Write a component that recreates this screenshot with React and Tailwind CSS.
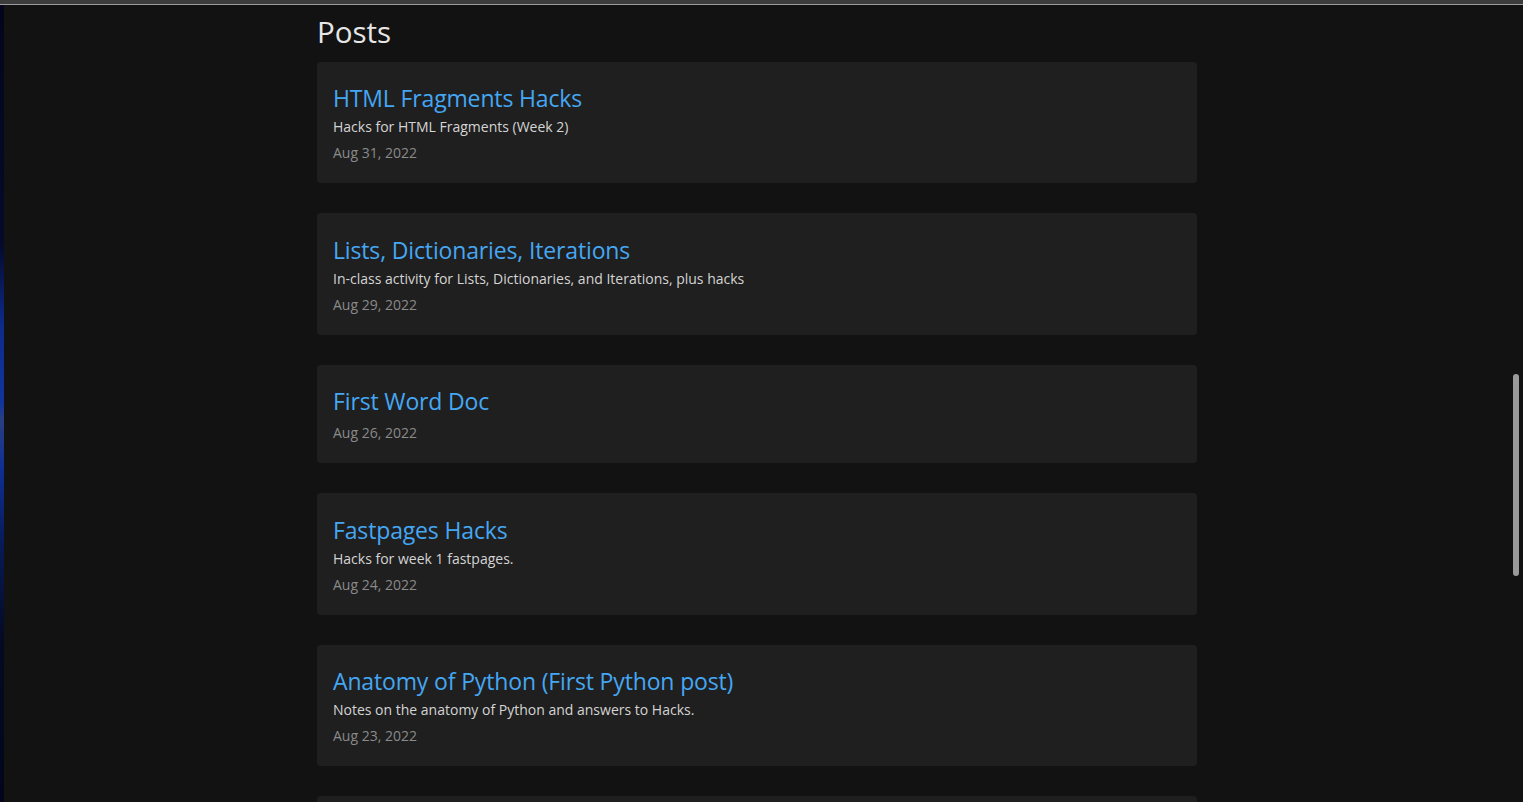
import React from "react";

const posts = [
  { title: "HTML Fragments Hacks", desc: "Hacks for HTML Fragments (Week 2)", date: "Aug 31, 2022" },
  { title: "Lists, Dictionaries, Iterations", desc: "In-class activity for Lists, Dictionaries, and Iterations, plus hacks", date: "Aug 29, 2022" },
  { title: "First Word Doc", desc: null, date: "Aug 26, 2022" },
  { title: "Fastpages Hacks", desc: "Hacks for week 1 fastpages.", date: "Aug 24, 2022" },
  { title: "Anatomy of Python (First Python post)", desc: "Notes on the anatomy of Python and answers to Hacks.", date: "Aug 23, 2022" },
];

export default function App() {
  return (
    <div className="relative h-[802px] w-full overflow-hidden bg-[#121212] font-['Open_Sans','Noto_Sans',sans-serif]">
      <div className="h-[4px] w-full bg-[#3c3c3c]" />
      <div className="h-px w-full bg-[#9c9c9c]" />
      <div className="flex h-[797px]">
        <div className="w-[4px] shrink-0 bg-[linear-gradient(to_bottom,#03061a_0%,#050a2a_30%,#0d2a8a_40%,#12359c_50%,#2a3f80_52%,#0f2f95_58%,#071a55_68%,#040a22_80%,#03061a_100%)]" />
        <main className="flex-1 pl-[313px]">
          <div className="w-[880px]">
            <h1 className="mt-[9px] mb-[11.9px] text-[29.5px] leading-[36px] text-[#e6e6e6]">Posts</h1>
            <div className="flex flex-col gap-[30px]">
              {posts.map((p) => (
                <div key={p.title} className="rounded-[4px] bg-[#1f1f1f] px-4 pt-[20.5px] pb-[16px]">
                  <div className="text-[23px] leading-[33px] tracking-[-0.15px] text-[#45a7f3]">{p.title}</div>
                  {p.desc && <div className="text-[14px] leading-[23px] text-[#d4d4d4]">{p.desc}</div>}
                  <div className="text-[14px] leading-[29px] text-[#8a8a8a]">{p.date}</div>
                </div>
              ))}
              <div className="h-[121.5px] rounded-[4px] bg-[#1f1f1f]" />
            </div>
          </div>
        </main>
      </div>
      <div className="absolute right-[4px] top-[374px] h-[202px] w-[6px] rounded-full bg-[#9a9a9a]" />
    </div>
  );
}
